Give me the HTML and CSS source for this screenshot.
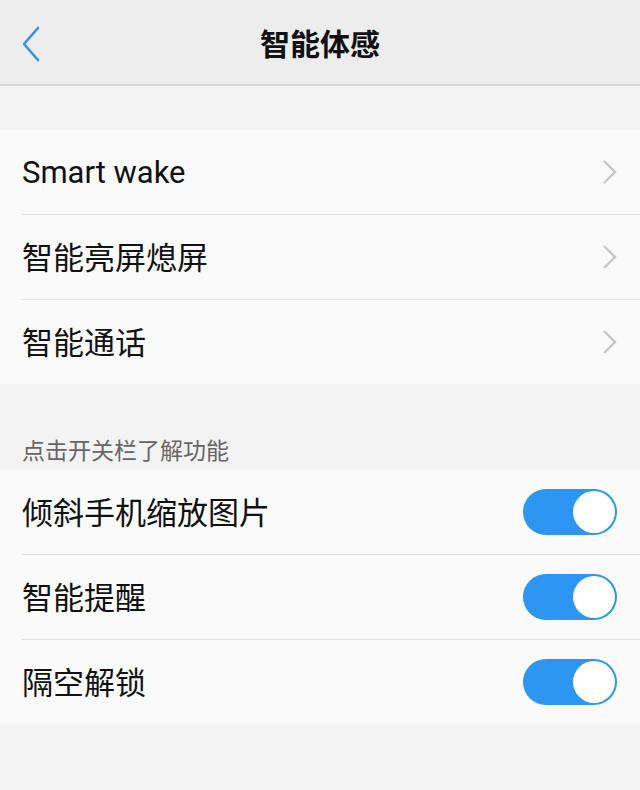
FILE: index.html
```html
<!DOCTYPE html>
<html lang="zh-CN">
<head>
    <meta charset="UTF-8">
    <meta name="viewport" content="width=device-width, initial-scale=1.0">
    <title>智能体感</title>
    <link rel="stylesheet" href="styles.css">
</head>
<body>

    <header class="topbar">
        <a class="back" href="#">
            <svg width="18" height="36" viewBox="0 0 18 36">
                <polyline points="16,2 2,18 16,34" fill="none" stroke="#3a90e8" stroke-width="2.6" stroke-linecap="round" stroke-linejoin="round"/>
            </svg>
        </a>
        <h1 class="title">智能体感</h1>
    </header>

    <ul class="group first">
        <li class="row">
            <span class="label latin">Smart wake</span>
            <svg class="chevron" width="16" height="26" viewBox="0 0 16 26">
                <polyline points="2,2 13,13 2,24" fill="none" stroke="#c6c6c6" stroke-width="2.4"/>
            </svg>
        </li>
        <li class="row">
            <span class="label">智能亮屏熄屏</span>
            <svg class="chevron" width="16" height="26" viewBox="0 0 16 26">
                <polyline points="2,2 13,13 2,24" fill="none" stroke="#c6c6c6" stroke-width="2.4"/>
            </svg>
        </li>
        <li class="row">
            <span class="label">智能通话</span>
            <svg class="chevron" width="16" height="26" viewBox="0 0 16 26">
                <polyline points="2,2 13,13 2,24" fill="none" stroke="#c6c6c6" stroke-width="2.4"/>
            </svg>
        </li>
    </ul>

    <p class="caption">点击开关栏了解功能</p>

    <ul class="group">
        <li class="row">
            <span class="label">倾斜手机缩放图片</span>
            <span class="switch on"><span class="knob"></span></span>
        </li>
        <li class="row">
            <span class="label">智能提醒</span>
            <span class="switch on"><span class="knob"></span></span>
        </li>
        <li class="row">
            <span class="label">隔空解锁</span>
            <span class="switch on"><span class="knob"></span></span>
        </li>
    </ul>

</body>
</html>
```

FILE: styles.css
```css
html, body {
    margin: 0;
    padding: 0;
}

body {
    background-color: #f3f3f3;
    font-family: "Noto Sans CJK SC", "Noto Sans", sans-serif;
    color: #111;
    height: 790px;
    overflow: hidden;
}

.topbar {
    height: 84px;
    background-color: #ededed;
    border-bottom: 2px solid #d9d9d9;
    display: flex;
    align-items: center;
    justify-content: center;
    position: relative;
}

.back {
    position: absolute;
    left: 22px;
    top: 26px;
    display: block;
    line-height: 0;
}

.title {
    margin: 0;
    font-size: 30px;
    font-weight: 700;
    color: #111;
}

.group {
    list-style: none;
    margin: 0;
    padding: 0;
    background-color: #fafafa;
}

.group.first {
    margin-top: 44px;
}

.row {
    height: 84px;
    margin-left: 22px;
    padding-right: 22px;
    display: flex;
    align-items: center;
    justify-content: space-between;
    border-bottom: 1px solid #e2e2e2;
}

.row:last-child {
    border-bottom: none;
}

.label {
    font-size: 31px;
    line-height: 1;
    padding-bottom: 4px;
    color: #111;
}

.label.latin {
    font-family: Roboto, "Noto Sans", sans-serif;
    font-size: 31px;
    padding-bottom: 0;
}

.caption {
    margin: 0;
    height: 86px;
    box-sizing: border-box;
    padding: 50px 0 0 22px;
    font-size: 23px;
    line-height: 30px;
    color: #666;
}

.switch {
    width: 94px;
    height: 46px;
    border-radius: 23px;
    background-color: #2d95f2;
    position: relative;
    box-sizing: border-box;
    margin-right: 1px;
}

.knob {
    position: absolute;
    right: 2px;
    top: 2px;
    width: 42px;
    height: 42px;
    border-radius: 50%;
    background-color: #fff;
}
```
